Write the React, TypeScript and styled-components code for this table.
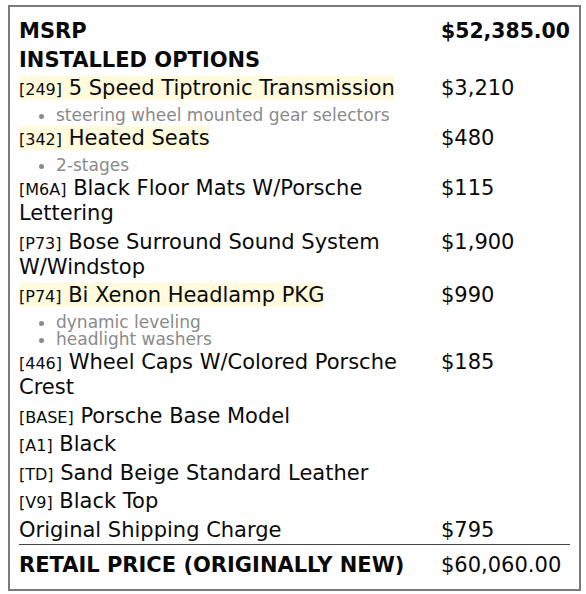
import React from "react";
import styled, { createGlobalStyle } from "styled-components";

const GlobalStyle = createGlobalStyle`
  body {
    margin: 0;
    background: #fff;
    font-family: "DejaVu Sans", "Liberation Sans", sans-serif;
    color: #0a0a0a;
  }
`;

const items = [
  { code: "249", name: "5 Speed Tiptronic Transmission", price: "$3,210", hl: true, notes: ["steering wheel mounted gear selectors"] },
  { code: "342", name: "Heated Seats", price: "$480", hl: true, notes: ["2-stages"] },
  { code: "M6A", name: "Black Floor Mats W/Porsche Lettering", price: "$115" },
  { code: "P73", name: "Bose Surround Sound System W/Windstop", price: "$1,900" },
  { code: "P74", name: "Bi Xenon Headlamp PKG", price: "$990", hl: true, notes: ["dynamic leveling", "headlight washers"] },
  { code: "446", name: "Wheel Caps W/Colored Porsche Crest", price: "$185" },
  { code: "BASE", name: "Porsche Base Model" },
  { code: "A1", name: "Black" },
  { code: "TD", name: "Sand Beige Standard Leather" },
  { code: "V9", name: "Black Top" },
];

export default function App() {
  return (
    <>
      <GlobalStyle />
      <Sticker>
        <Table>
          <colgroup>
            <col style={{ width: 422 }} />
            <col />
          </colgroup>
          <tbody>
            <Row>
              <Label bold>MSRP</Label>
              <Price bold>$52,385.00</Price>
            </Row>
            <Row>
              <Label bold colSpan={2}>
                INSTALLED OPTIONS
              </Label>
            </Row>
            {items.map((it) => (
              <Row key={it.code}>
                <Label>
                  <Option hl={it.hl}>
                    <Code>[{it.code}]</Code> {it.name}
                  </Option>
                  {it.notes && (
                    <Notes>
                      {it.notes.map((n) => (
                        <li key={n}>{n}</li>
                      ))}
                    </Notes>
                  )}
                </Label>
                <Price>{it.price}</Price>
              </Row>
            ))}
            <Row>
              <Label>Original Shipping Charge</Label>
              <Price>$795</Price>
            </Row>
            <Row total>
              <Label bold>RETAIL PRICE (ORIGINALLY NEW)</Label>
              <Price>$60,060.00</Price>
            </Row>
          </tbody>
        </Table>
      </Sticker>
    </>
  );
}

const Sticker = styled.div`
  margin: 5px 0 0 8px;
  width: 573px;
  box-sizing: border-box;
  border: 2px solid #7a7a7a;
  padding: 10px 9px 9px 9px;
`;

const Table = styled.table`
  width: 100%;
  border-collapse: collapse;
  table-layout: fixed;
  font-size: 21px;
  line-height: 25px;
`;

const Row = styled.tr<{ total?: boolean }>`
  td {
    vertical-align: top;
    padding: ${(p) => (p.total ? "8px 0 1.5px" : "2px 0 1.5px")};
    border-top: ${(p) => (p.total ? "1px solid #444" : "none")};
  }
`;

const Label = styled.td<{ bold?: boolean }>`
  font-weight: ${(p) => (p.bold ? 700 : 400)};
  padding-right: 10px;
`;

const Price = styled.td<{ bold?: boolean }>`
  font-weight: ${(p) => (p.bold ? 700 : 400)};
  font-size: ${(p) => (p.bold ? "20.4px" : "21px")};
`;

const Option = styled.span<{ hl?: boolean }>`
  background: ${(p) => (p.hl ? "#fffbdc" : "transparent")};
`;

const Code = styled.span`
  font-size: 16px;
  line-height: 1;
`;

const Notes = styled.ul`
  margin: 6px 0 -1.5px;
  padding-left: 37px;
  font-size: 17px;
  line-height: 17px;
  color: #8a8a8a;
`;
